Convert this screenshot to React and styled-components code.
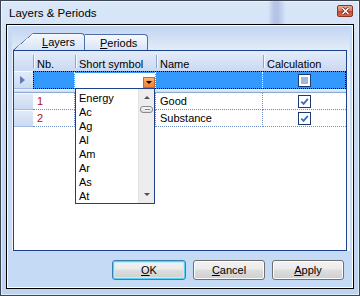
import React from "react";
import styled, { createGlobalStyle, css } from "styled-components";

const GlobalStyle = createGlobalStyle`
  html, body {
    margin: 0;
    padding: 0;
  }

  body {
    font-family: "Liberation Sans", Arial, sans-serif;
    font-size: 11px;
    color: #000;
    background: #fff;
  }

  * {
    box-sizing: border-box;
  }
`;

const Window = styled.div`
  width: 360px;
  height: 296px;
  border: 1px solid #3d4654;
  padding: 0 5px 6px 5px;
  display: flex;
  flex-direction: column;
  background: linear-gradient(#d9e7f8, #c6daf2 40%, #bed3ee);
  box-shadow: inset 0 0 0 1px rgba(255, 255, 255, 0.55);
`;

const TitleBar = styled.div`
  height: 23px;
  display: flex;
  align-items: center;
  padding: 0 1px 0 3px;
  background: linear-gradient(
    90deg,
    transparent 262px,
    rgba(120, 130, 205, 0.35) 268px,
    rgba(120, 130, 205, 0.35) 272px,
    transparent 280px
  );
`;

const Title = styled.span`
  font-size: 11.5px;
  color: #000;
`;

const CloseButton = styled.div`
  margin-left: auto;
  align-self: flex-start;
  margin-top: 4px;
  width: 16px;
  height: 12px;
  border: 1px solid #8a3525;
  border-radius: 2px;
  background: linear-gradient(#eeab94, #de7c60 45%, #c9492d 55%, #d86a4e);
  display: flex;
  align-items: center;
  justify-content: center;
`;

const Client = styled.div`
  flex: 1;
  border: 1px solid #000;
  box-shadow: inset 0 0 0 1px #fff;
  background: #c5daf4;
  padding: 2px 3px 8px 5px;
  display: flex;
  flex-direction: column;
`;

const Panel = styled.div`
  height: 224px;
  padding: 6px 3px 0 1px;
  background: linear-gradient(#c2d5f1, #e4edf9 24px, #f3f7fd 60px, #f3f7fd);
  display: flex;
  flex-direction: column;
`;

const TabStrip = styled.div`
  height: 17px;
  display: flex;
  align-items: flex-end;
`;

const tabLine = "#4d6ea6";

const Tab = styled.div`
  height: ${(p) => (p.$active ? 17 : 16)}px;
  width: ${(p) => p.$w}px;
  padding-left: ${(p) => p.$pl}px;
  border-top: 1px solid ${tabLine};
  border-right: 1px solid ${tabLine};
  border-top-right-radius: 4px;
  background-origin: border-box;
  background: linear-gradient(#f6f9fe, #d8e4f6);
  display: flex;
  align-items: center;
  font-size: 11px;

  ${(p) =>
    p.$slant &&
    css`
      clip-path: polygon(0 100%, 20px 0, 100% 0, 100% 100%);
      background:
        linear-gradient(
            to bottom right,
            transparent calc(50% - 1px),
            ${tabLine} calc(50% - 1px),
            ${tabLine} calc(50% + 0.6px),
            transparent calc(50% + 0.6px)
          )
          0 0 / 20px 100% no-repeat border-box,
        linear-gradient(#f6f9fe, #d8e4f6) border-box;
    `}
`;

const Grid = styled.div`
  position: relative;
  flex: 1;
  border: 1px solid #1d4290;
  background: #fff;
`;

const Row = styled.div`
  display: flex;
  height: ${(p) => p.$h}px;
`;

const HeaderRow = styled(Row)`
  background: linear-gradient(#e3ecf9, #cad9f2);
`;

const HeadCell = styled.div`
  position: relative;
  width: ${(p) => p.$w}px;
  padding: 5px 0 0 4px;
  display: flex;
  align-items: center;
  color: #000;

  &::before {
    content: "";
    position: absolute;
    left: 0;
    top: 4px;
    bottom: 3px;
    width: 1px;
    background: #8ea6cf;
    box-shadow: 1px 0 0 #f6f9fe;
  }
`;

const RowHead = styled.div`
  width: 19px;
  flex: none;
  padding-left: 6px;
  display: flex;
  align-items: center;
  background: linear-gradient(#e2ebf9, #cbdaf2);
  box-shadow: inset 0 1px 0 #f6f9fe;
  border-bottom: 1px solid #a6bde2;
`;

const CornerHead = styled.div`
  width: 19px;
  flex: none;
`;

const RowArrow = styled.span`
  width: 0;
  height: 0;
  border-left: 5px solid #5a7bbd;
  border-top: 4px solid transparent;
  border-bottom: 4px solid transparent;
`;

const EditGroup = styled.div`
  display: flex;
  width: 313px;
  border: 1px dotted #000;
  background: #3399ff;
`;

const EditCell = styled.div`
  width: ${(p) => p.$w}px;
  display: flex;
  align-items: ${(p) => (p.$center ? "center" : "stretch")};
  justify-content: ${(p) => (p.$center ? "center" : "flex-start")};
  border-right: ${(p) => (p.$last ? "none" : "1px dotted #fff")};
  padding-top: ${(p) => (p.$center ? 0 : 1)}px;
`;

const EditBox = styled.div`
  flex: 1;
  background: #fff;
  display: flex;
  align-items: flex-end;
  justify-content: flex-end;
`;

const ComboButton = styled.div`
  width: 12px;
  height: 11px;
  border: 1px solid #c46a2c;
  background: linear-gradient(#fbb77d, #f5934a 50%, #f08439);
  display: flex;
  align-items: center;
  justify-content: center;

  &::after {
    content: "";
    border-top: 3px solid #000;
    border-left: 3px solid transparent;
    border-right: 3px solid transparent;
  }
`;

const Separator = styled.div`
  height: 4px;
  background: linear-gradient(#f1f5fc, #cbdaf1);
  border-bottom: 1px solid #8ca7d3;
`;

const Cell = styled.div`
  width: ${(p) => p.$w}px;
  display: flex;
  align-items: center;
  justify-content: ${(p) => (p.$center ? "center" : "flex-start")};
  padding-left: ${(p) => (p.$center ? 0 : 4)}px;
  border-right: ${(p) => (p.$last ? "none" : "1px dotted #6f8dc4")};
  border-bottom: 1px dotted #6f8dc4;
  color: ${(p) => (p.$red ? "#b3100e" : "#000")};
`;

const CheckBox = styled.span`
  width: 13px;
  height: 13px;
  border: 1px solid #1c3a6e;
  background: #fff;
  display: flex;
  align-items: center;
  justify-content: center;

  ${(p) =>
    p.$mixed &&
    css`
      background: #a3b7da;
      box-shadow: inset 0 0 0 2px #fff;
    `}
`;

const DropList = styled.div`
  position: absolute;
  left: 61px;
  top: 37px;
  width: 80px;
  height: 116px;
  border: 1px solid #1d3f8c;
  background: #fff;
  display: flex;
  z-index: 2;
  overflow: hidden;
`;

const Items = styled.div`
  flex: 1;
  padding: 2px 0 0 3px;
`;

const Item = styled.div`
  height: 14px;
  line-height: 14px;
  font-size: 11px;
`;

const ScrollBar = styled.div`
  width: 16px;
  display: flex;
  flex-direction: column;
  align-items: center;
  background: #ededed;
  border-left: 1px solid #e2e2e2;
`;

const ScrollArrow = styled.div`
  height: 17px;
  width: 100%;
  display: flex;
  align-items: center;
  justify-content: center;

  &::after {
    content: "";
    border-left: 3px solid transparent;
    border-right: 3px solid transparent;
    ${(p) =>
      p.$down
        ? css`border-top: 3px solid #505050;`
        : css`border-bottom: 3px solid #505050;`}
  }
`;

const Thumb = styled.div`
  width: 13px;
  height: 7px;
  border: 1px solid #8b8b8b;
  border-radius: 3px;
  background: repeating-linear-gradient(#f6f6f6 0 1px, #7d7d7d 1px 2px) 4px 1px / 5px 3px no-repeat,
    linear-gradient(#f7f7f7, #dadada);
`;

const Track = styled.div`
  flex: 1;
`;

const ButtonBar = styled.div`
  margin-top: 9px;
  height: 20px;
  display: flex;
  justify-content: flex-end;
  gap: 7px;
  padding-right: 6px;
`;

const Button = styled.button`
  width: ${(p) => p.$w}px;
  height: 20px;
  padding: 0;
  border: 1px solid #707070;
  border-radius: 3px;
  background: linear-gradient(#f2f2f2, #ebebeb 45%, #dddddd 50%, #cfcfcf);
  box-shadow: inset 0 0 0 1px #fcfcfc;
  font-family: "Liberation Sans", Arial, sans-serif;
  font-size: 11px;
  color: #000;

  u {
    text-decoration: underline;
  }

  ${(p) =>
    p.$default &&
    css`
      border-color: #3c7fb1;
      box-shadow: inset 0 0 0 1px #5ccff5, inset 0 0 0 2px #c2eefc;
    `}
`;

const columns = [42, 81, 107, 83];

const symbols = ["Energy", "Ac", "Ag", "Al", "Am", "Ar", "As", "At"];

const rows = [
  { nb: 1, name: "Good" },
  { nb: 2, name: "Substance" },
];

function CheckMark() {
  return (
    <svg width="9" height="9" viewBox="0 0 9 9">
      <path d="M1.3 4.6 L3.6 6.9 L7.8 1.9" fill="none" stroke="#3a6fc4" strokeWidth="1.8" />
    </svg>
  );
}

function CloseGlyph() {
  return (
    <svg width="9" height="8" viewBox="0 0 9 8">
      <path d="M1.5 1 L7.5 7 M7.5 1 L1.5 7" stroke="#5a2418" strokeWidth="3" />
      <path d="M1.5 1 L7.5 7 M7.5 1 L1.5 7" stroke="#fff" strokeWidth="1.6" />
    </svg>
  );
}

export default function App() {
  return (
    <>
      <GlobalStyle />
      <Window>
        <TitleBar>
          <Title>Layers &amp; Periods</Title>
          <CloseButton>
            <CloseGlyph />
          </CloseButton>
        </TitleBar>
        <Client>
          <Panel>
            <TabStrip>
              <Tab $active $slant $w={72} $pl={29}>
                <u>L</u>ayers
              </Tab>
              <Tab $w={63} $pl={15}>
                <u>P</u>eriods
              </Tab>
            </TabStrip>
            <Grid>
              <HeaderRow $h={20}>
                <CornerHead />
                <HeadCell $w={columns[0]}>Nb.</HeadCell>
                <HeadCell $w={columns[1]}>Short symbol</HeadCell>
                <HeadCell $w={columns[2]}>Name</HeadCell>
                <HeadCell $w={columns[3]}>Calculation</HeadCell>
              </HeaderRow>

              <Row $h={18}>
                <RowHead>
                  <RowArrow />
                </RowHead>
                <EditGroup>
                  <EditCell $w={41} />
                  <EditCell $w={81}>
                    <EditBox>
                      <ComboButton />
                    </EditBox>
                  </EditCell>
                  <EditCell $w={107} />
                  <EditCell $w={82} $center $last>
                    <CheckBox $mixed />
                  </EditCell>
                </EditGroup>
              </Row>

              <Separator />

              {rows.map((r) => (
                <Row $h={17} key={r.nb}>
                  <RowHead />
                  <Cell $w={columns[0]} $red>
                    {r.nb}
                  </Cell>
                  <Cell $w={columns[1]} />
                  <Cell $w={columns[2]}>{r.name}</Cell>
                  <Cell $w={columns[3]} $center $last>
                    <CheckBox>
                      <CheckMark />
                    </CheckBox>
                  </Cell>
                </Row>
              ))}

              <DropList>
                <Items>
                  {symbols.map((s) => (
                    <Item key={s}>{s}</Item>
                  ))}
                </Items>
                <ScrollBar>
                  <ScrollArrow />
                  <Thumb />
                  <Track />
                  <ScrollArrow $down />
                </ScrollBar>
              </DropList>
            </Grid>
          </Panel>
          <ButtonBar>
            <Button $w={74} $default>
              <u>O</u>K
            </Button>
            <Button $w={72}>
              <u>C</u>ancel
            </Button>
            <Button $w={72}>
              <u>A</u>pply
            </Button>
          </ButtonBar>
        </Client>
      </Window>
    </>
  );
}
